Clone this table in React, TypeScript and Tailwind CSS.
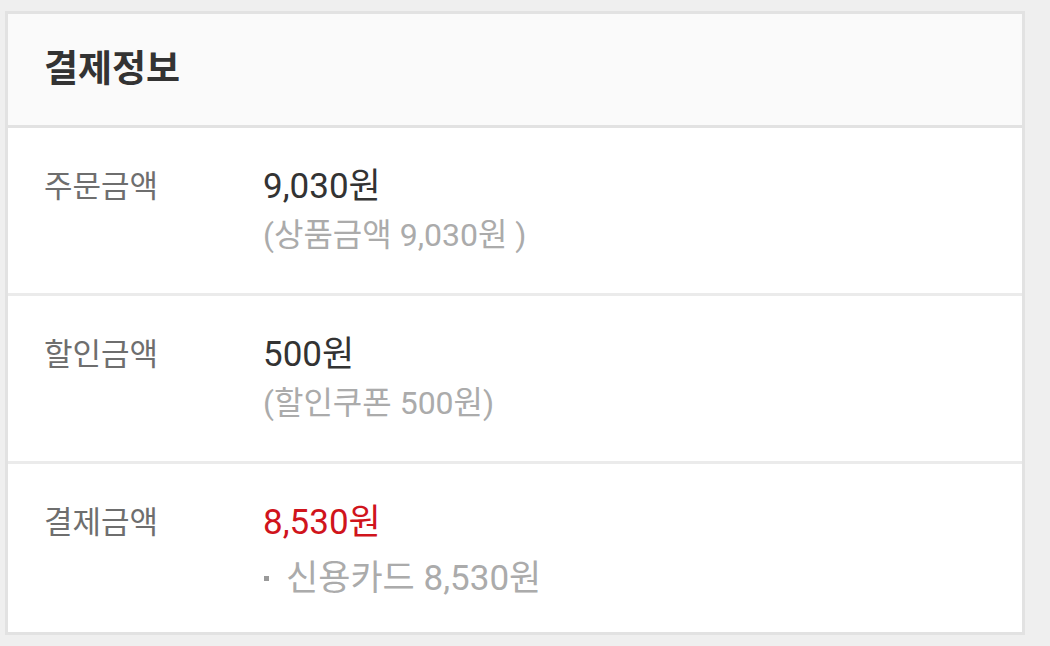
const FONT = "font-['Roboto','Noto_Sans_CJK_KR',sans-serif]"

interface Row {
  label: string
  amount: string
  red?: boolean
  detail: string
  bullet?: boolean
}

const rows: Row[] = [
  { label: '주문금액', amount: '9,030원', detail: '(상품금액 9,030원 )' },
  { label: '할인금액', amount: '500원', detail: '(할인쿠폰 500원)' },
  { label: '결제금액', amount: '8,530원', red: true, detail: '신용카드 8,530원', bullet: true },
]

export default function App() {
  return (
    <div className={`${FONT} min-h-[646px] w-[1050px] bg-[#efefef] pt-[11px] pl-[5px]`}>
      <div className="w-[1020px] border-[3px] border-[#e2e2e2] bg-white">
        <div className="flex h-[114px] items-center border-b-[3px] border-[#e2e2e2] bg-[#fafafa] pl-[36px] pb-[1px]">
          <h2 className="text-[37px] font-bold leading-none text-[#333]">결제정보</h2>
        </div>
        {rows.map((r, i) => (
          <div
            key={r.label}
            className={`flex h-[168px] pt-[34px] pl-[36px] ${i < rows.length - 1 ? 'border-b-[3px] border-[#ebebeb]' : ''}`}
          >
            <div className="w-[219px] text-[31px] leading-[49px] text-[#6e6e6e]">{r.label}</div>
            <div className="flex flex-col leading-[49px]">
              <span className={`text-[35px] ${r.red ? 'text-[#d0141c]' : 'text-[#333]'}`}>{r.amount}</span>
              <span
                className={`flex items-center text-[#ababab] ${r.bullet ? 'mt-[7px] text-[35px]' : 'text-[32px]'}`}
              >
                {r.bullet && <span className="mr-[17px] ml-[1px] inline-block h-[5px] w-[5px] bg-[#9a9a9a]" />}
                {r.detail}
              </span>
            </div>
          </div>
        ))}
      </div>
    </div>
  )
}
